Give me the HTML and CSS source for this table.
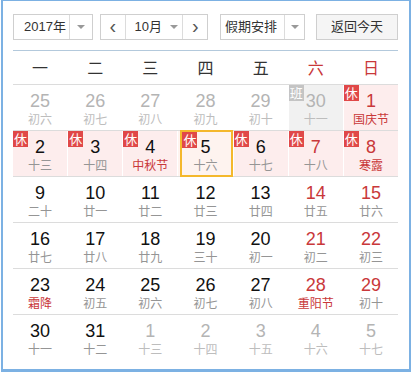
FILE: index.html
```html
<!DOCTYPE html>
<html lang="zh">
<head>
<meta charset="utf-8">
<link rel="stylesheet" href="styles.css">
</head>
<body>
<div class="frame">
  <div class="toolbar">
    <div class="select year"><span class="sel-label">2017年</span><span class="sel-arrow"><i class="tri"></i></span></div>
    <div class="month-group">
      <span class="nav prev">&lsaquo;</span>
      <span class="month"><span class="month-label">10月</span><i class="tri"></i></span>
      <span class="nav next">&rsaquo;</span>
    </div>
    <div class="select holiday"><span class="sel-label">假期安排</span><span class="sel-arrow"><i class="tri"></i></span></div>
    <div class="today">返回今天</div>
  </div>
  <div class="sep"></div>
  <div class="weekdays">
    <span>一</span><span>二</span><span>三</span><span>四</span><span>五</span><span class="we">六</span><span class="we">日</span>
  </div>
  <div class="row">
    <div class="cell other"><div class="num">25</div><div class="lunar">初六</div></div>
    <div class="cell other"><div class="num">26</div><div class="lunar">初七</div></div>
    <div class="cell other"><div class="num">27</div><div class="lunar">初八</div></div>
    <div class="cell other"><div class="num">28</div><div class="lunar">初九</div></div>
    <div class="cell other"><div class="num">29</div><div class="lunar">初十</div></div>
    <div class="cell other work"><span class="badge gray">班</span><div class="num">30</div><div class="lunar">十一</div></div>
    <div class="cell rest red"><span class="badge">休</span><div class="num">1</div><div class="lunar fest">国庆节</div></div>
  </div>
  <div class="row">
    <div class="cell rest"><span class="badge">休</span><div class="num">2</div><div class="lunar">十三</div></div>
    <div class="cell rest"><span class="badge">休</span><div class="num">3</div><div class="lunar">十四</div></div>
    <div class="cell rest"><span class="badge">休</span><div class="num">4</div><div class="lunar fest">中秋节</div></div>
    <div class="cell rest selected"><span class="badge">休</span><div class="num">5</div><div class="lunar">十六</div></div>
    <div class="cell rest"><span class="badge">休</span><div class="num">6</div><div class="lunar">十七</div></div>
    <div class="cell rest red"><span class="badge">休</span><div class="num">7</div><div class="lunar">十八</div></div>
    <div class="cell rest red"><span class="badge">休</span><div class="num">8</div><div class="lunar fest">寒露</div></div>
  </div>
  <div class="row">
    <div class="cell"><div class="num">9</div><div class="lunar">二十</div></div>
    <div class="cell"><div class="num">10</div><div class="lunar">廿一</div></div>
    <div class="cell"><div class="num">11</div><div class="lunar">廿二</div></div>
    <div class="cell"><div class="num">12</div><div class="lunar">廿三</div></div>
    <div class="cell"><div class="num">13</div><div class="lunar">廿四</div></div>
    <div class="cell red"><div class="num">14</div><div class="lunar">廿五</div></div>
    <div class="cell red"><div class="num">15</div><div class="lunar">廿六</div></div>
  </div>
  <div class="row">
    <div class="cell"><div class="num">16</div><div class="lunar">廿七</div></div>
    <div class="cell"><div class="num">17</div><div class="lunar">廿八</div></div>
    <div class="cell"><div class="num">18</div><div class="lunar">廿九</div></div>
    <div class="cell"><div class="num">19</div><div class="lunar">三十</div></div>
    <div class="cell"><div class="num">20</div><div class="lunar">初一</div></div>
    <div class="cell red"><div class="num">21</div><div class="lunar">初二</div></div>
    <div class="cell red"><div class="num">22</div><div class="lunar">初三</div></div>
  </div>
  <div class="row">
    <div class="cell"><div class="num">23</div><div class="lunar fest">霜降</div></div>
    <div class="cell"><div class="num">24</div><div class="lunar">初五</div></div>
    <div class="cell"><div class="num">25</div><div class="lunar">初六</div></div>
    <div class="cell"><div class="num">26</div><div class="lunar">初七</div></div>
    <div class="cell"><div class="num">27</div><div class="lunar">初八</div></div>
    <div class="cell red"><div class="num">28</div><div class="lunar fest">重阳节</div></div>
    <div class="cell red"><div class="num">29</div><div class="lunar">初十</div></div>
  </div>
  <div class="row">
    <div class="cell"><div class="num">30</div><div class="lunar">十一</div></div>
    <div class="cell"><div class="num">31</div><div class="lunar">十二</div></div>
    <div class="cell other"><div class="num">1</div><div class="lunar">十三</div></div>
    <div class="cell other"><div class="num">2</div><div class="lunar">十四</div></div>
    <div class="cell other"><div class="num">3</div><div class="lunar">十五</div></div>
    <div class="cell other"><div class="num">4</div><div class="lunar">十六</div></div>
    <div class="cell other"><div class="num">5</div><div class="lunar">十七</div></div>
  </div>
</div>
</body>
</html>
```
FILE: styles.css
```css
* { box-sizing: border-box; }
html, body { margin: 0; padding: 0; background: #fff; }
body {
  font-family: "Liberation Sans", "Noto Sans CJK SC", sans-serif;
  color: #111;
}
.frame {
  margin-left: 1px;
  width: 410px;
  height: 372px;
  border: 2px solid #7cb1e3;
  border-top-width: 1px;
  border-bottom-width: 3px;
  padding: 13px 11px 0 10px;
  overflow: hidden;
}
.toolbar {
  display: flex;
  height: 26px;
  font-size: 13px;
  color: #333;
}
.select, .month-group, .today {
  display: flex;
  border: 1px solid #cfcfcf;
  background: #fff;
  height: 26px;
  line-height: 24px;
}
.year { width: 80px; }
.year .sel-label { width: 55px; padding-left: 10px; }
.sel-arrow {
  flex: 1;
  border-left: 1px solid #dcdcdc;
  display: flex;
  align-items: center;
  justify-content: center;
}
.tri {
  display: inline-block;
  width: 0; height: 0;
  border-left: 4px solid transparent;
  border-right: 4px solid transparent;
  border-top: 4px solid #999;
}
.month-group { margin-left: 7px; width: 108px; }
.nav {
  width: 24px;
  text-align: center;
  font-size: 20px;
  line-height: 22px;
  color: #555;
}
.next { width: 25px; border-left: 1px solid #dcdcdc; }
.month {
  width: 59px;
  border-left: 1px solid #dcdcdc;
  display: flex;
  align-items: center;
  padding-left: 9px;
}
.month-label { width: 35px; }
.holiday { margin-left: 12px; width: 85px; }
.holiday .sel-label { width: 63px; padding-left: 4px; }
.today {
  margin-left: 11px;
  width: 82px;
  justify-content: center;
  background: #f5f5f5;
  color: #333;
}
.sep {
  margin-top: 10px;
  height: 1px;
  background: #b3c9dc;
}
.weekdays {
  display: grid;
  grid-template-columns: repeat(7, 1fr);
  column-gap: 1px;
  height: 33px;
  line-height: 33px;
  text-align: center;
  font-family: "Noto Sans CJK SC", sans-serif;
  font-size: 16px;
  color: #333;
}
.weekdays .we { color: #c9383a; }
.row {
  display: grid;
  grid-template-columns: repeat(7, 1fr);
  column-gap: 1px;
  height: 46px;
  border-top: 1px solid #dcdcdc;
}
.cell {
  position: relative;
  text-align: center;
  padding-top: 6px;
}
.num {
  font-size: 18px;
  line-height: 20px;
  color: #111;
}
.lunar {
  font-family: "Noto Sans CJK SC", sans-serif;
  font-size: 12px;
  line-height: 15px;
  color: #959595;
}
.red .num { color: #c9383a; }
.lunar.fest { color: #c9383a; }
.other .num { color: #b4b4b4; }
.other .lunar { color: #bdbdbd; }
.rest { background: #fdeded; }
.work { background: #f1f1f1; }
.badge {
  position: absolute;
  top: 0;
  left: 0;
  width: 15px;
  height: 16px;
  background: #e04848;
  color: #fff;
  font-family: "Noto Sans CJK SC", sans-serif;
  font-size: 13px;
  line-height: 16px;
  text-align: center;
  z-index: 2;
}
.badge.gray { background: #c4c4c4; }
.selected { background: #fef3ef; }
.selected::after {
  content: "";
  position: absolute;
  top: -1px;
  bottom: -1px;
  left: 2px;
  right: 0;
  border: 2px solid #f4b82c;
  z-index: 1;
}
.selected .badge { left: 4px; top: 1px; }
```
